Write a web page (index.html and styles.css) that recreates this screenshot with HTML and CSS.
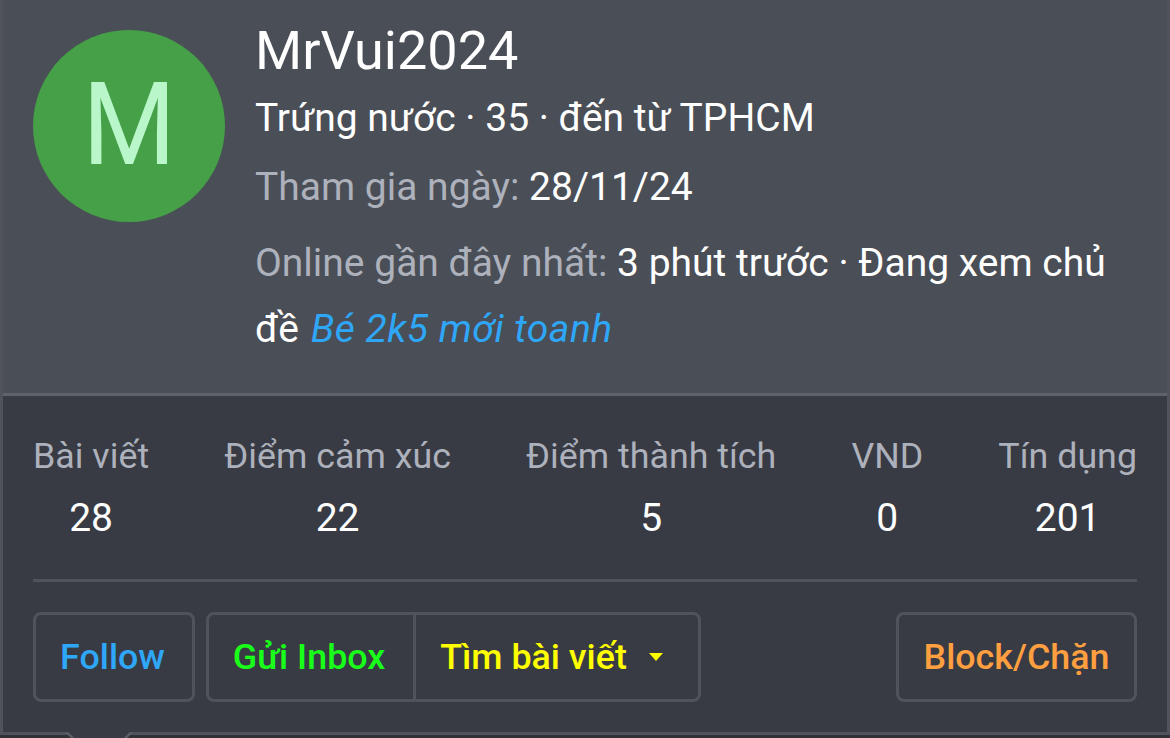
FILE: index.html
```html
<!DOCTYPE html>
<html lang="vi">
<head>
    <meta charset="UTF-8">
    <meta name="viewport" content="width=device-width, initial-scale=1.0">
    <title>MrVui2024</title>
    <link rel="stylesheet" href="styles.css">
</head>
<body>
    <div class="member-tooltip">
        <header class="member-header">
            <div class="avatar"><span class="initial">M</span></div>
            <div class="member-info">
                <h4 class="member-name">MrVui2024</h4>
                <div class="member-blurb">Trứng nước · 35 · đến từ TPHCM</div>
                <div class="member-row"><span class="muted">Tham gia ngày:</span> 28/11/24</div>
                <div class="member-row last-seen"><span class="muted">Online gần đây nhất:</span> 3 phút trước · Đang xem chủ đề <a class="thread-link">Bé 2k5 mới toanh</a></div>
            </div>
        </header>
        <div class="member-body">
            <div class="stats">
                <dl><dt>Bài viết</dt><dd>28</dd></dl>
                <dl><dt>Điểm cảm xúc</dt><dd>22</dd></dl>
                <dl><dt>Điểm thành tích</dt><dd>5</dd></dl>
                <dl><dt>VND</dt><dd>0</dd></dl>
                <dl><dt>Tín dụng</dt><dd>201</dd></dl>
            </div>
            <hr class="separator">
            <div class="actions">
                <a class="button follow">Follow</a>
                <div class="button-group">
                    <a class="button inbox">Gửi Inbox</a>
                    <a class="button search">Tìm bài viết <span class="caret"></span></a>
                </div>
                <a class="button block">Block/Chặn</a>
            </div>
        </div>
        <svg class="arrow" width="66" height="6" viewBox="0 0 66 6">
            <path d="M0 0 L7 6 H59 L66 0 Z" fill="#383b43"/>
            <path d="M0 -0.5 L7 6.5 M66 -0.5 L59 6.5" fill="none" stroke="#5a5d65" stroke-width="2.5"/>
        </svg>
    </div>
</body>
</html>
```
FILE: styles.css
```css
* {
    box-sizing: border-box;
}

body {
    margin: 0;
    height: 738px;
    overflow: hidden;
    background: #303136;
    color: #fefefe;
    font-family: Roboto, "Noto Sans", sans-serif;
    font-size: 39px;
}

.member-tooltip {
    position: relative;
    height: 735px;
    border: 3px solid #50535b;
    border-top: 0;
    background: #383b43;
}

.member-header {
    display: flex;
    gap: 30px;
    height: 396px;
    padding: 20px 30px 0;
    background: #4a4e56;
    border-bottom: 3px solid #5f6269;
}

.avatar {
    flex: none;
    width: 192px;
    height: 192px;
    margin-top: 10px;
    border-radius: 50%;
    background: #45a047;
    color: #b9f6ca;
    font-size: 115px;
    line-height: 190px;
    text-align: center;
}

.initial {
    display: inline-block;
    transform: scaleX(0.93);
}

.member-info {
    flex: 1;
}

.member-name {
    margin: 0;
    font-size: 54px;
    font-weight: 400;
    line-height: 62px;
}

.member-blurb {
    line-height: 72px;
}

.member-row {
    line-height: 66px;
}

.last-seen {
    margin-top: 10px;
}

.muted {
    color: #adb1bc;
}

.thread-link {
    margin-left: 2px;
    color: #2fa7f8;
    font-style: italic;
    letter-spacing: 0.5px;
}

.member-body {
    padding: 30px 30px 0;
}

.stats {
    display: flex;
    justify-content: space-between;
    text-align: center;
}

.stats dl {
    margin: 0;
}

.stats dt {
    color: #adb1bc;
    font-size: 35.8px;
    line-height: 61px;
}

.stats dd {
    margin: 0;
    height: 62px;
    line-height: 63px;
}

.separator {
    height: 3px;
    margin: 30px 0;
    border: 0;
    background: #50535b;
}

.actions {
    display: flex;
}

.button {
    display: flex;
    align-items: center;
    justify-content: center;
    height: 90px;
    border: 3px solid #50535b;
    border-radius: 8px;
    font-size: 35.8px;
    font-weight: 500;
}

.button-group {
    display: flex;
    margin-left: 11px;
}

.follow {
    width: 162px;
    padding-right: 3px;
    color: #2fa7f8;
}

.inbox {
    width: 210px;
    padding-right: 4px;
    border-radius: 8px 0 0 8px;
    color: #19ff19;
}

.search {
    width: 288px;
    margin-left: -3px;
    border-radius: 0 8px 8px 0;
    color: #ffff00;
}

.caret {
    margin: 0 11px 0 22px;
    border: 7px solid transparent;
    border-top: 8px solid #ffff00;
    border-bottom: 0;
}

.block {
    width: 241px;
    margin-left: auto;
    color: #ff9f40;
}

.arrow {
    position: absolute;
    left: 63px;
    top: 732px;
}
```
